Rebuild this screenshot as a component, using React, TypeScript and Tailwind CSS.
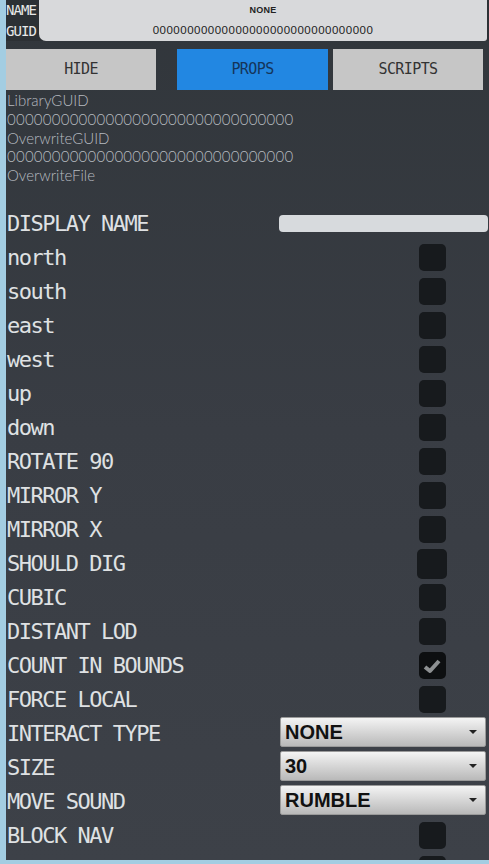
import React from "react";

const mono = { fontFamily: '"DejaVu Sans Mono", "Liberation Mono", monospace' };
const light = { fontFamily: 'Lato, "Open Sans", sans-serif' };
const arial = { fontFamily: '"Liberation Sans", Arial, sans-serif' };

type Row =
  | { label: string; kind: "check"; checked?: boolean; big?: boolean }
  | { label: string; kind: "input" }
  | { label: string; kind: "select"; value: string };

const rows: Row[] = [
  { label: "DISPLAY NAME", kind: "input" },
  { label: "north", kind: "check" },
  { label: "south", kind: "check" },
  { label: "east", kind: "check" },
  { label: "west", kind: "check" },
  { label: "up", kind: "check" },
  { label: "down", kind: "check" },
  { label: "ROTATE 90", kind: "check" },
  { label: "MIRROR Y", kind: "check" },
  { label: "MIRROR X", kind: "check" },
  { label: "SHOULD DIG", kind: "check", big: true },
  { label: "CUBIC", kind: "check" },
  { label: "DISTANT LOD", kind: "check" },
  { label: "COUNT IN BOUNDS", kind: "check", checked: true },
  { label: "FORCE LOCAL", kind: "check" },
  { label: "INTERACT TYPE", kind: "select", value: "NONE" },
  { label: "SIZE", kind: "select", value: "30" },
  { label: "MOVE SOUND", kind: "select", value: "RUMBLE" },
  { label: "BLOCK NAV", kind: "check" },
  { label: "", kind: "check" },
];

const zeros = "00000000000000000000000000000000";

function Check({ checked, big }: { checked?: boolean; big?: boolean }) {
  return (
    <div className="w-[32px] flex justify-center">
      <div
        className={
          (big ? "w-[30px] h-[30px] " : "w-[27px] h-[27px] ") +
          (checked ? "bg-[#0d0f11] " : "bg-[#171a1d] ") +
          "rounded-[5px] flex items-center justify-center"
        }
      >
        {checked && (
          <svg width="18" height="16" viewBox="0 0 18 16">
            <path d="M2 9 L7 13 L16 3" stroke="#8d9092" strokeWidth="4" fill="none" strokeLinejoin="round" />
          </svg>
        )}
      </div>
    </div>
  );
}

function Select({ value }: { value: string }) {
  return (
    <div className="w-[206px] h-[30px] mr-[3px] mb-[3px] rounded-[2px] border border-[#9a9a9a] bg-gradient-to-b from-[#f4f4f4] to-[#b9b9b9] flex items-center justify-between pl-[4px] pr-[8px]">
      <span className="text-[20px] font-bold text-[#111] leading-none" style={arial}>
        {value}
      </span>
      <svg width="8" height="4" viewBox="0 0 8 4">
        <path d="M0 0 L8 0 L4 4 Z" fill="#222" />
      </svg>
    </div>
  );
}

export default function App() {
  return (
    <div className="w-[489px] h-[864px] overflow-hidden bg-[#a3cde2] pl-[6px] pb-[4px]">
      <div className="h-[860px] overflow-hidden bg-gradient-to-b from-[#31363b] via-[#393d44] to-[#3d4148] flex flex-col">
        {/* header */}
        <div className="flex h-[41px] shrink-0 bg-[#2c3034]">
          <div
            className="w-[33px] flex flex-col justify-around text-[14px] leading-none text-[#e8e8e8] tracking-[-0.9px] pl-[0px]"
            style={mono}
          >
            <span>NAME</span>
            <span>GUID</span>
          </div>
          <div className="flex-1 mr-[2px] bg-[#d8d9db] rounded-bl-[7px] rounded-br-[3px] flex flex-col">
            <div className="h-[22px] flex items-center justify-center">
              <span className="text-[9px] font-bold text-[#222] tracking-[0.3px]" style={arial}>
                NONE
              </span>
            </div>
            <div className="flex-1 flex items-center justify-center pb-[2px]">
              <span className="text-[11.5px] text-[#222] tracking-[0.5px]" style={arial}>
                {zeros}
              </span>
            </div>
          </div>
        </div>

        {/* tabs */}
        <div className="flex mt-[8px] h-[41px] shrink-0">
          <div className="w-[150px] bg-[#c6c6c6] flex items-center justify-center">
            <span className="text-[15px] text-[#333] tracking-[-0.6px]" style={mono}>HIDE</span>
          </div>
          <div className="w-[151px] ml-[21px] bg-[#2287e2] flex items-center justify-center">
            <span className="text-[15px] text-[#15355a] tracking-[-0.6px]" style={mono}>PROPS</span>
          </div>
          <div className="w-[150px] ml-[5px] bg-[#c6c6c6] flex items-center justify-center">
            <span className="text-[15px] text-[#333] tracking-[-0.6px]" style={mono}>SCRIPTS</span>
          </div>
        </div>

        {/* info lines */}
        <div className="shrink-0 pl-[1px] pt-[1px] text-[15px] leading-[18.8px] font-light text-[#b7bbc0]" style={light}>
          <div>LibraryGUID</div>
          <div className="tracking-[0.25px]">{zeros}</div>
          <div>OverwriteGUID</div>
          <div className="tracking-[0.25px]">{zeros}</div>
          <div>OverwriteFile</div>
        </div>

        {/* rows */}
        <div className="shrink-0 mt-[22px] flex flex-col">
          {rows.map((r, i) => (
            <div key={i} className="h-[34px] flex items-center justify-between shrink-0">
              <span
                className="pl-[1px] text-[22px] text-[#dfe1e3] tracking-[-1.5px] leading-none"
                style={mono}
              >
                {r.label}
              </span>
              {r.kind === "check" && (
                <div className="mr-[41px]">
                  <Check checked={r.checked} big={r.big} />
                </div>
              )}
              {r.kind === "input" && (
                <div className="w-[209px] h-[17px] mr-[1px] rounded-[4px] bg-[#d7dadd]" />
              )}
              {r.kind === "select" && <Select value={r.value} />}
            </div>
          ))}
        </div>
      </div>
    </div>
  );
}
